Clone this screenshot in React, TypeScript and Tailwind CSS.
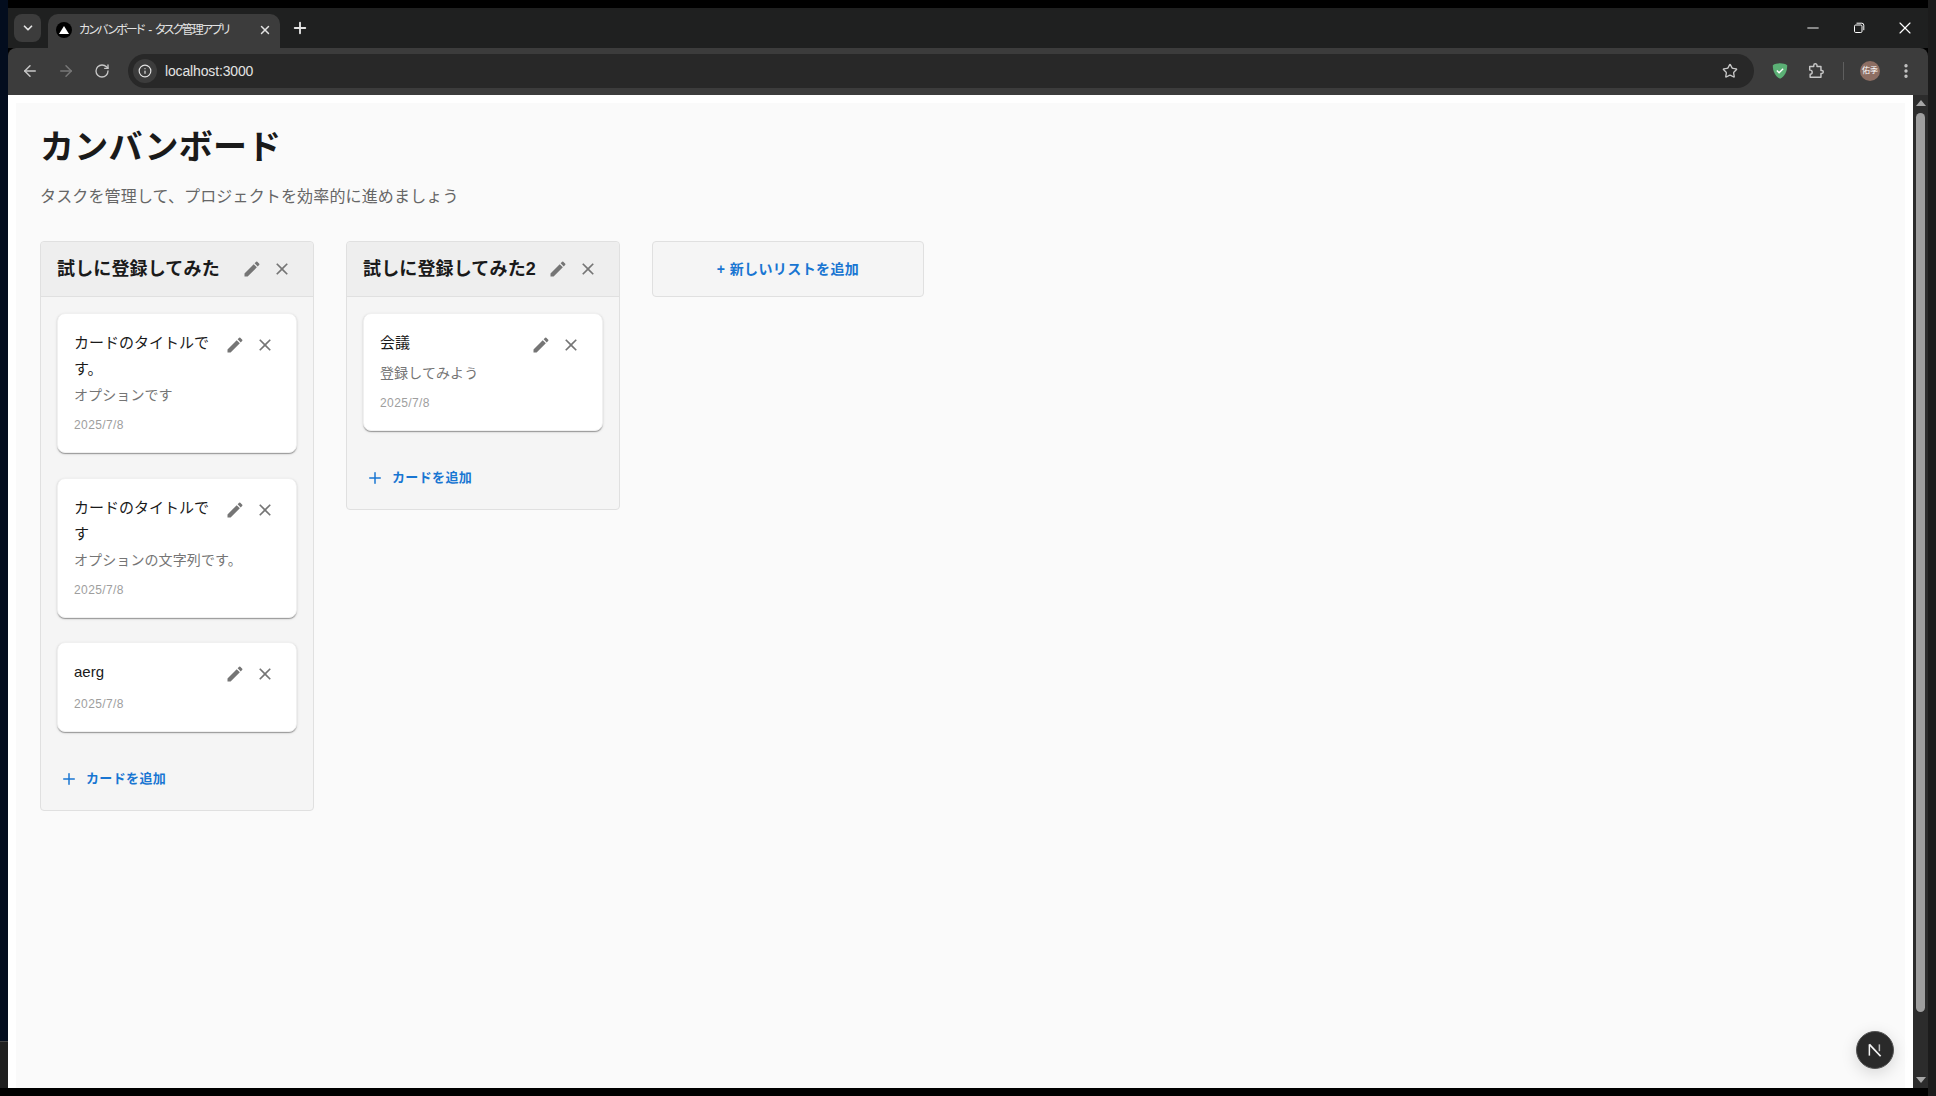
import { ArrowLeft, ArrowRight, ChevronDown, EllipsisVertical, Info, Minus, Plus, RotateCw, Star, X } from "lucide-react"

const font = "font-['Liberation_Sans','Noto_Sans_CJK_JP',sans-serif]"

function EditIcon() {
  return (
    <svg viewBox="0 0 24 24" className="w-5 h-5 fill-[#757575]">
      <path d="M3 17.25V21h3.75L17.81 9.94l-3.75-3.75L3 17.25zM20.71 7.04c.39-.39.39-1.02 0-1.41l-2.34-2.34a.9959.9959 0 0 0-1.41 0l-1.83 1.83 3.75 3.75 1.83-1.83z" />
    </svg>
  )
}

function CloseIcon() {
  return (
    <svg viewBox="0 0 24 24" className="w-5 h-5 fill-[#757575]">
      <path d="M19 6.41 17.59 5 12 10.59 6.41 5 5 6.41 10.59 12 5 17.59 6.41 19 12 13.41 17.59 19 19 17.59 13.41 12z" />
    </svg>
  )
}

function Actions() {
  return (
    <div className="flex shrink-0">
      <button className="p-[5px]"><EditIcon /></button>
      <button className="p-[5px]"><CloseIcon /></button>
    </div>
  )
}

function TaskCard({ title, description, date }: { title: string; description?: string; date: string }) {
  return (
    <div className="bg-white border border-[#f0f0f0] rounded-lg px-4 pt-[15px] pb-[18px] shadow-[0_2px_1px_-1px_rgba(0,0,0,0.2),0_1px_1px_0_rgba(0,0,0,0.14),0_1px_3px_0_rgba(0,0,0,0.12)]">
      <div className="flex items-start justify-between">
        <div className="mt-px -mb-px text-[15px] leading-[26px] font-normal text-[#1a1a1a]">{title}</div>
        <div className="mt-px -mb-px"><Actions /></div>
      </div>
      {description && <div className="text-sm leading-5 text-[#757575] mt-1 mb-[11px] tracking-[0.1px]">{description}</div>}
      <div className="text-xs leading-[18px] text-[#9e9e9e] tracking-[0.4px] mt-[7px]">{date}</div>
    </div>
  )
}

function Column({ title, children }: { title: string; children: React.ReactNode }) {
  return (
    <div className="w-[274px] shrink-0 bg-[#f5f5f5] border border-[#e0e0e0] rounded">
      <div className="flex items-center justify-between h-[55px] px-4 bg-[#eeeeee] border-b border-[#e0e0e0] rounded-t">
        <div className="text-lg font-bold text-[#1a1a1a] whitespace-nowrap tracking-[0.15px]">{title}</div>
        <Actions />
      </div>
      <div className="p-4">
        <div className="flex flex-col gap-[24.5px]">{children}</div>
        <button className="flex items-center gap-[8px] mt-[37px] ml-[3px] h-[20px] text-[13px] font-bold tracking-[0.37px] text-[#1976d2]">
          <Plus className="w-[18px] h-[18px]" strokeWidth={2} />
          カードを追加
        </button>
        <div className="h-[5px]" />
      </div>
    </div>
  )
}

function BrowserChrome() {
  return (
    <div className="shrink-0">
      {/* Tab strip */}
      <div className="h-10 bg-[#1f2020] flex items-end pl-[6px] relative">
        <div className="w-[27px] h-7 mb-[6px] rounded-lg bg-[#3c3c3c] flex items-center justify-center">
          <ChevronDown className="w-[14px] h-[14px] text-[#e3e3e3]" strokeWidth={3} />
        </div>
        <div className="w-[232px] h-[34px] ml-[7px] rounded-t-[10px] bg-[#3c3c3c] flex items-center pl-2 pr-2 pb-[2px]">
          <div className="w-4 h-4 rounded-full bg-black flex items-center justify-center">
            <div className="w-0 h-0 border-l-[5px] border-r-[5px] border-b-[8px] border-l-transparent border-r-transparent border-b-white" />
          </div>
          <div className="ml-[7px] w-[160px] text-xs text-[#e3e3e3] whitespace-nowrap [font-feature-settings:'palt'] tracking-[-1.8px] [word-spacing:3px]">カンバンボード - タスク管理アプリ</div>
          <X className="ml-auto w-[14px] h-[14px] text-[#e3e3e3]" strokeWidth={2.5} />
        </div>
        <Plus className="w-[18px] h-[18px] ml-[11px] mb-[11px] text-[#e3e3e3]" strokeWidth={2.5} />
        <div className="ml-auto flex items-center h-10 self-start">
          <button className="w-[46px] flex justify-center"><Minus className="w-[18px] h-[18px] text-white" strokeWidth={1.25} /></button>
          <button className="w-[46px] flex justify-center">
            <svg viewBox="0 0 12 12" className="w-3 h-3 fill-none stroke-white">
              <rect x="1.5" y="3" width="7.5" height="7.5" rx="1.2" />
              <path d="M3.5 1.2h5.3a2 2 0 0 1 2 2v5" />
            </svg>
          </button>
          <button className="w-[46px] flex justify-center"><X className="w-5 h-5 text-white" strokeWidth={1.4} /></button>
        </div>
      </div>
      {/* Toolbar */}
      <div className="h-[47px] bg-[#3c3c3c] rounded-t-lg flex items-center pl-[13px] pb-px">
        <ArrowLeft className="w-[18px] h-[18px] text-[#c7c7c7]" strokeWidth={2} />
        <ArrowRight className="w-[18px] h-[18px] ml-[18px] text-[#777777]" strokeWidth={2} />
        <RotateCw className="w-4 h-4 ml-[19px] text-[#c7c7c7]" strokeWidth={2} />
        <div className="ml-[18px] w-[1626px] h-[34px] rounded-full bg-[#282828] flex items-center pl-[5px] pr-4">
          <div className="w-6 h-6 rounded-full bg-[#3c3c3c] flex items-center justify-center">
            <Info className="w-[14px] h-[14px] text-[#e3e3e3]" strokeWidth={2} />
          </div>
          <div className="ml-2 text-sm text-[#e3e3e3] tracking-[-0.15px]">localhost:3000</div>
          <Star className="ml-auto w-4 h-4 text-[#c7c7c7]" strokeWidth={2} />
        </div>
        <svg viewBox="0 0 20 20" className="ml-[17px] w-[18px] h-[18px]">
          <path d="M10 1.500c3 0 6 .8 8 2 0 7-2.500 12-8 15-5.500-3-8-8-8-15 2-1.200 5-2 8-2z" fill="#5bb075" />
          <path d="M6.500 9.500l2.500 2.500 4.500-4.500" fill="none" stroke="#ffffff" strokeWidth="1.600" />
        </svg>
        <svg viewBox="0 0 20 20" className="ml-[18px] w-[18px] h-[18px] fill-none stroke-[#c7c7c7]" strokeWidth="1.600" strokeLinejoin="round">
          <path d="M3 5h4.500V3.800a1.800 1.800 0 0 1 3.600 0V5H15.500v4.500h1a1.600 1.600 0 0 1 0 3.200h-1V17H3.500v-3.500a2.200 2.200 0 0 0 0-4.500H3z" />
        </svg>
        <div className="ml-[18px] w-px h-[18px] bg-[#5f5f5f]" />
        <div className="ml-[16px] w-5 h-5 rounded-full bg-[#8d6e63] flex items-center justify-center text-[8px] text-white whitespace-nowrap">佑季</div>
        <EllipsisVertical className="ml-[17px] w-[18px] h-[18px] text-[#c7c7c7]" strokeWidth={2.5} />
      </div>
    </div>
  )
}

export default function App() {
  return (
    <div className={`w-[1936px] h-[1096px] overflow-hidden bg-black flex ${font}`}>
      <div className="w-2 h-full flex flex-col shrink-0">
        <div className="h-[1041px] bg-[#030d1e]" />
        <div className="flex-1 bg-[#1f1f1f] border-t border-[#444444]" />
        <div className="h-2 bg-black" />
      </div>

      <div className="w-[1920px] h-full pt-2 pb-2 flex flex-col">
        <BrowserChrome />
        <div className="flex-1 min-h-0 flex relative bg-white">
          {/* Page */}
          <div className="flex-1 pt-2 px-2">
            <div className="h-full bg-[#fafafa] px-6 pt-[23px]">
              <h1 className="text-[34px] leading-[42px] font-bold text-[#1a1a1a] tracking-[0.25px]">カンバンボード</h1>
              <p className="mt-[17px] text-base leading-6 text-[#666666] tracking-[0.15px]">タスクを管理して、プロジェクトを効率的に進めましょう</p>
              <div className="mt-8 flex items-start gap-8">
                <Column title="試しに登録してみた">
                  <TaskCard title="カードのタイトルです。" description="オプションです" date="2025/7/8" />
                  <TaskCard title="カードのタイトルです" description="オプションの文字列です。" date="2025/7/8" />
                  <TaskCard title="aerg" date="2025/7/8" />
                </Column>
                <Column title="試しに登録してみた2">
                  <TaskCard title="会議" description="登録してみよう" date="2025/7/8" />
                </Column>
                <button className="w-[272px] h-[56px] bg-[#f5f5f5] border border-[#e0e0e0] rounded text-sm font-bold tracking-[0.4px] text-[#1976d2]">
                  + 新しいリストを追加
                </button>
              </div>
            </div>
          </div>
          {/* Scrollbar */}
          <div className="w-[15px] bg-[#2c2c2c] flex flex-col items-center shrink-0">
            <div className="mt-[5px] w-0 h-0 border-l-[5px] border-r-[5px] border-b-[6px] border-l-transparent border-r-transparent border-b-[#a6a6a6]" />
            <div className="mt-[7px] w-[9px] flex-1 rounded-full bg-[#9e9e9e] mb-[65px]" />
            <div className="mb-[5px] w-0 h-0 border-l-[5px] border-r-[5px] border-t-[6px] border-l-transparent border-r-transparent border-t-[#a6a6a6]" />
          </div>
          {/* Next.js dev badge */}
          <div className="absolute left-[1848px] top-[936px] w-[38px] h-[38px] rounded-full bg-[#2a2a2a] border border-[#555555] flex items-center justify-center shadow-[0_4px_16px_rgba(0,0,0,0.15)]">
            <svg viewBox="0 0 16 16" className="w-5 h-5">
              <path d="M3.500 12.500V3.500" stroke="#f5f5f5" strokeWidth="1.200" fill="none" />
              <path d="M3.500 3.500L12.500 13" stroke="#f5f5f5" strokeWidth="1.400" fill="none" />
              <path d="M11.500 3.500V9" stroke="#bbbbbb" strokeWidth="1.200" fill="none" />
            </svg>
          </div>
        </div>
      </div>

      <div className="w-2 h-full bg-[#1c1c1c] shrink-0" />
    </div>
  )
}
